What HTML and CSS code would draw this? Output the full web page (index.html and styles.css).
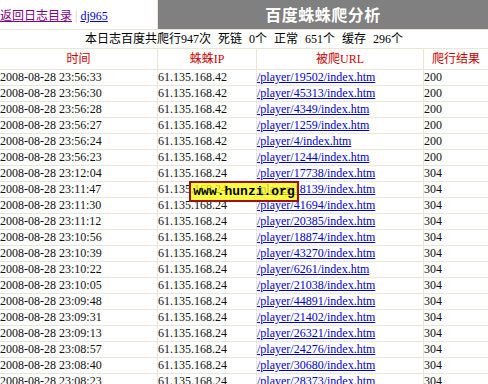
FILE: index.html
```html
<!DOCTYPE html>
<html lang="zh">
<head>
<meta charset="utf-8">
<title>百度蛛蛛爬分析</title>
<link rel="stylesheet" href="styles.css">
</head>
<body>
<div class="log">
  <div class="c top-left"><a class="back" href="#">返回日志目录</a> <span class="sep">|</span> <a class="user" href="#">dj965</a></div>
  <div class="c title">百度蛛蛛爬分析</div>
  <div class="c stats">本日志百度共爬行947次 死链 0个 正常 651个 缓存 296个</div>
  <div class="c th">时间</div>
  <div class="c th">蛛蛛IP</div>
  <div class="c th">被爬URL</div>
  <div class="c th last">爬行结果</div>

  <div class="c td">2008-08-28 23:56:33</div><div class="c td">61.135.168.42</div><div class="c td"><a href="#">/player/19502/index.htm</a></div><div class="c td last">200</div>
  <div class="c td">2008-08-28 23:56:30</div><div class="c td">61.135.168.42</div><div class="c td"><a href="#">/player/45313/index.htm</a></div><div class="c td last">200</div>
  <div class="c td">2008-08-28 23:56:28</div><div class="c td">61.135.168.42</div><div class="c td"><a href="#">/player/4349/index.htm</a></div><div class="c td last">200</div>
  <div class="c td">2008-08-28 23:56:27</div><div class="c td">61.135.168.42</div><div class="c td"><a href="#">/player/1259/index.htm</a></div><div class="c td last">200</div>
  <div class="c td">2008-08-28 23:56:24</div><div class="c td">61.135.168.42</div><div class="c td"><a href="#">/player/4/index.htm</a></div><div class="c td last">200</div>
  <div class="c td">2008-08-28 23:56:23</div><div class="c td">61.135.168.42</div><div class="c td"><a href="#">/player/1244/index.htm</a></div><div class="c td last">200</div>
  <div class="c td">2008-08-28 23:12:04</div><div class="c td">61.135.168.24</div><div class="c td"><a href="#">/player/17738/index.htm</a></div><div class="c td last">304</div>
  <div class="c td">2008-08-28 23:11:47</div><div class="c td">61.135.168.24</div><div class="c td"><a href="#">/player/18139/index.htm</a></div><div class="c td last">304</div>
  <div class="c td">2008-08-28 23:11:30</div><div class="c td">61.135.168.24</div><div class="c td"><a href="#">/player/41694/index.htm</a></div><div class="c td last">304</div>
  <div class="c td">2008-08-28 23:11:12</div><div class="c td">61.135.168.24</div><div class="c td"><a href="#">/player/20385/index.htm</a></div><div class="c td last">304</div>
  <div class="c td">2008-08-28 23:10:56</div><div class="c td">61.135.168.24</div><div class="c td"><a href="#">/player/18874/index.htm</a></div><div class="c td last">304</div>
  <div class="c td">2008-08-28 23:10:39</div><div class="c td">61.135.168.24</div><div class="c td"><a href="#">/player/43270/index.htm</a></div><div class="c td last">304</div>
  <div class="c td">2008-08-28 23:10:22</div><div class="c td">61.135.168.24</div><div class="c td"><a href="#">/player/6261/index.htm</a></div><div class="c td last">304</div>
  <div class="c td">2008-08-28 23:10:05</div><div class="c td">61.135.168.24</div><div class="c td"><a href="#">/player/21038/index.htm</a></div><div class="c td last">304</div>
  <div class="c td">2008-08-28 23:09:48</div><div class="c td">61.135.168.24</div><div class="c td"><a href="#">/player/44891/index.htm</a></div><div class="c td last">304</div>
  <div class="c td">2008-08-28 23:09:31</div><div class="c td">61.135.168.24</div><div class="c td"><a href="#">/player/21402/index.htm</a></div><div class="c td last">304</div>
  <div class="c td">2008-08-28 23:09:13</div><div class="c td">61.135.168.24</div><div class="c td"><a href="#">/player/26321/index.htm</a></div><div class="c td last">304</div>
  <div class="c td">2008-08-28 23:08:57</div><div class="c td">61.135.168.24</div><div class="c td"><a href="#">/player/24276/index.htm</a></div><div class="c td last">304</div>
  <div class="c td">2008-08-28 23:08:40</div><div class="c td">61.135.168.24</div><div class="c td"><a href="#">/player/30680/index.htm</a></div><div class="c td last">304</div>
  <div class="c td">2008-08-28 23:08:23</div><div class="c td">61.135.168.24</div><div class="c td"><a href="#">/player/28373/index.htm</a></div><div class="c td last">304</div>
</div>
<div class="tip">www.hunzi.org</div>
</body>
</html>
```

FILE: styles.css
```css
html, body {
  margin: 0;
  padding: 0;
  overflow: hidden;
  background: #fff;
}
body {
  position: relative;
  font-family: "Liberation Serif", "Noto Sans CJK SC", serif;
  font-size: 12px;
  color: #000;
}
.log {
  display: grid;
  grid-template-columns: 158px 99px 167px 64px;
  width: 488px;
}
.c {
  box-sizing: border-box;
  border-right: 1px solid #e9e6d8;
  border-bottom: 1px solid #e9e6d8;
  white-space: nowrap;
  overflow: hidden;
}
.last {
  border-right: none;
}
.top-left {
  line-height: 29px;
  height: 30px;
}
.back {
  color: #800080;
  font-family: "Noto Sans CJK SC", sans-serif;
}
.sep {
  color: #c8c8c8;
}
.user {
  color: #0000cc;
}
.title {
  grid-column: span 3;
  height: 30px;
  line-height: 29px;
  background: #808080;
  color: #fff;
  font-family: "Noto Sans CJK SC", sans-serif;
  font-weight: bold;
  font-size: 16px;
  letter-spacing: 0.5px;
  text-align: center;
  border-right: none;
}
.stats {
  grid-column: span 4;
  height: 19px;
  line-height: 18px;
  text-align: center;
  word-spacing: 4px;
  border-right: none;
}
.th {
  height: 21px;
  line-height: 20px;
  text-align: center;
  color: #cc0000;
}
.td {
  height: 16px;
  line-height: 15px;
  color: #111;
}
.td a {
  color: #0000cc;
}
.tip {
  position: absolute;
  left: 189px;
  top: 181px;
  width: 110px;
  height: 21px;
  box-sizing: border-box;
  border: 2px solid #a01010;
  background: rgba(255, 255, 0, 0.72);
  font-family: "Liberation Mono", monospace;
  font-weight: bold;
  font-size: 13px;
  line-height: 17px;
  text-align: center;
  color: #000;
}
```
